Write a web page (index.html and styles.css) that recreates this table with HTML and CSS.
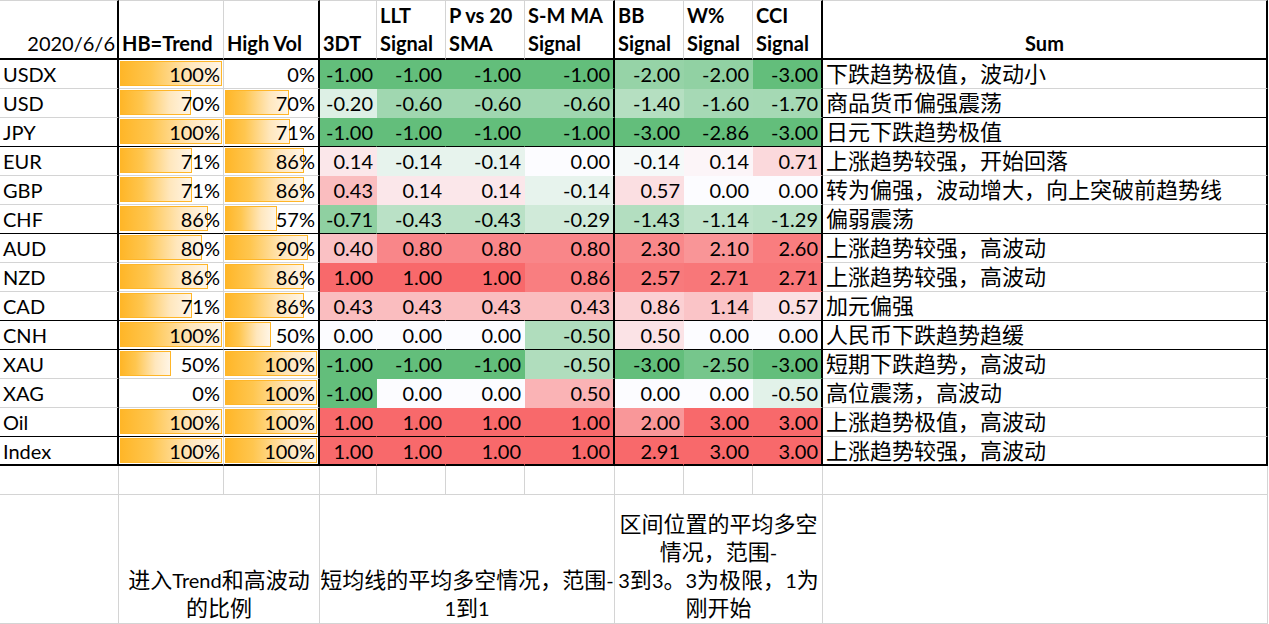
FILE: index.html
```html
<!DOCTYPE html>
<html lang="zh-CN">
<head>
<meta charset="utf-8">
<title>FX Signals 2020/6/6</title>
<link rel="stylesheet" href="styles.css">
</head>
<body>
<div class="sheet">
  <div class="r hd">
    <div class="c h l rk right">2020/6/6</div>
    <div class="c h l">HB=Trend</div>
    <div class="c h l rk">High Vol</div>
    <div class="c h">3DT</div>
    <div class="c h">LLT<br>Signal</div>
    <div class="c h">P vs 20<br>SMA</div>
    <div class="c h rk">S-M MA<br>Signal</div>
    <div class="c h">BB<br>Signal</div>
    <div class="c h">W%<br>Signal</div>
    <div class="c h rk">CCI<br>Signal</div>
    <div class="c h rk center">Sum</div>
  </div>

  <div class="r">
    <div class="c l nm rk">USDX</div>
    <div class="c l bc"><div class="trk"><div class="bar" style="width:100%"></div></div><span class="v">100%</span></div>
    <div class="c l bc rk"><div class="trk"></div><span class="v">0%</span></div>
    <div class="c n" style="background:#63BE7B">-1.00</div>
    <div class="c n" style="background:#63BE7B">-1.00</div>
    <div class="c n" style="background:#63BE7B">-1.00</div>
    <div class="c n rk" style="background:#63BE7B">-1.00</div>
    <div class="c n" style="background:#96D3A7">-2.00</div>
    <div class="c n" style="background:#91D1A3">-2.00</div>
    <div class="c n rk" style="background:#63BE7B">-3.00</div>
    <div class="c sum rk">下跌趋势极值，波动小</div>
  </div>

  <div class="r sb">
    <div class="c l nm rk">USD</div>
    <div class="c l bc"><div class="trk"><div class="bar" style="width:70%"></div></div><span class="v">70%</span></div>
    <div class="c l bc rk"><div class="trk"><div class="bar" style="width:70%"></div></div><span class="v">70%</span></div>
    <div class="c n" style="background:#DDF0E5">-0.20</div>
    <div class="c n" style="background:#A0D7B0">-0.60</div>
    <div class="c n" style="background:#A0D7B0">-0.60</div>
    <div class="c n rk" style="background:#A0D7B0">-0.60</div>
    <div class="c n" style="background:#B5DFC1">-1.40</div>
    <div class="c n" style="background:#A6D9B5">-1.60</div>
    <div class="c n rk" style="background:#A5D9B4">-1.70</div>
    <div class="c sum rk">商品货币偏强震荡</div>
  </div>

  <div class="r lb hb sb">
    <div class="c l nm rk">JPY</div>
    <div class="c l bc"><div class="trk"><div class="bar" style="width:100%"></div></div><span class="v">100%</span></div>
    <div class="c l bc rk"><div class="trk"><div class="bar" style="width:71%"></div></div><span class="v">71%</span></div>
    <div class="c n" style="background:#63BE7B">-1.00</div>
    <div class="c n" style="background:#63BE7B">-1.00</div>
    <div class="c n" style="background:#63BE7B">-1.00</div>
    <div class="c n rk" style="background:#63BE7B">-1.00</div>
    <div class="c n" style="background:#63BE7B">-3.00</div>
    <div class="c n" style="background:#63BE7B">-2.86</div>
    <div class="c n rk" style="background:#63BE7B">-3.00</div>
    <div class="c sum rk">日元下跌趋势极值</div>
  </div>

  <div class="r">
    <div class="c l nm rk">EUR</div>
    <div class="c l bc"><div class="trk"><div class="bar" style="width:71%"></div></div><span class="v">71%</span></div>
    <div class="c l bc rk"><div class="trk"><div class="bar" style="width:86%"></div></div><span class="v">86%</span></div>
    <div class="c n" style="background:#FBE7EA">0.14</div>
    <div class="c n" style="background:#E7F3ED">-0.14</div>
    <div class="c n" style="background:#E7F3ED">-0.14</div>
    <div class="c n rk" style="background:#FCFCFF">0.00</div>
    <div class="c n" style="background:#F5F9F9">-0.14</div>
    <div class="c n" style="background:#FCF5F8">0.14</div>
    <div class="c n rk" style="background:#FBD9DC">0.71</div>
    <div class="c sum rk">上涨趋势较强，开始回落</div>
  </div>

  <div class="r">
    <div class="c l nm rk">GBP</div>
    <div class="c l bc"><div class="trk"><div class="bar" style="width:71%"></div></div><span class="v">71%</span></div>
    <div class="c l bc rk"><div class="trk"><div class="bar" style="width:86%"></div></div><span class="v">86%</span></div>
    <div class="c n" style="background:#FABDBF">0.43</div>
    <div class="c n" style="background:#FBE7EA">0.14</div>
    <div class="c n" style="background:#FBE7EA">0.14</div>
    <div class="c n rk" style="background:#E7F3ED">-0.14</div>
    <div class="c n" style="background:#FBDFE2">0.57</div>
    <div class="c n" style="background:#FCFCFF">0.00</div>
    <div class="c n rk" style="background:#FCFCFF">0.00</div>
    <div class="c sum rk">转为偏强，波动增大，向上突破前趋势线</div>
  </div>

  <div class="r lb hb sb">
    <div class="c l nm rk">CHF</div>
    <div class="c l bc"><div class="trk"><div class="bar" style="width:86%"></div></div><span class="v">86%</span></div>
    <div class="c l bc rk"><div class="trk"><div class="bar" style="width:57%"></div></div><span class="v">57%</span></div>
    <div class="c n" style="background:#8FD0A1">-0.71</div>
    <div class="c n" style="background:#BAE1C6">-0.43</div>
    <div class="c n" style="background:#BAE1C6">-0.43</div>
    <div class="c n rk" style="background:#D0EAD9">-0.29</div>
    <div class="c n" style="background:#B3DEC0">-1.43</div>
    <div class="c n" style="background:#BFE3CA">-1.14</div>
    <div class="c n rk" style="background:#BAE1C6">-1.29</div>
    <div class="c sum rk">偏弱震荡</div>
  </div>

  <div class="r">
    <div class="c l nm rk">AUD</div>
    <div class="c l bc"><div class="trk"><div class="bar" style="width:80%"></div></div><span class="v">80%</span></div>
    <div class="c l bc rk"><div class="trk"><div class="bar" style="width:90%"></div></div><span class="v">90%</span></div>
    <div class="c n" style="background:#FAC1C4">0.40</div>
    <div class="c n" style="background:#F98689">0.80</div>
    <div class="c n" style="background:#F98689">0.80</div>
    <div class="c n rk" style="background:#F98689">0.80</div>
    <div class="c n" style="background:#F9888A">2.30</div>
    <div class="c n" style="background:#F99597">2.10</div>
    <div class="c n rk" style="background:#F97D7F">2.60</div>
    <div class="c sum rk">上涨趋势较强，高波动</div>
  </div>

  <div class="r">
    <div class="c l nm rk">NZD</div>
    <div class="c l bc"><div class="trk"><div class="bar" style="width:86%"></div></div><span class="v">86%</span></div>
    <div class="c l bc rk"><div class="trk"><div class="bar" style="width:86%"></div></div><span class="v">86%</span></div>
    <div class="c n" style="background:#F8696B">1.00</div>
    <div class="c n" style="background:#F8696B">1.00</div>
    <div class="c n" style="background:#F8696B">1.00</div>
    <div class="c n rk" style="background:#F97E80">0.86</div>
    <div class="c n" style="background:#F87A7C">2.57</div>
    <div class="c n" style="background:#F87779">2.71</div>
    <div class="c n rk" style="background:#F87779">2.71</div>
    <div class="c sum rk">上涨趋势较强，高波动</div>
  </div>

  <div class="r lb hb sb">
    <div class="c l nm rk">CAD</div>
    <div class="c l bc"><div class="trk"><div class="bar" style="width:71%"></div></div><span class="v">71%</span></div>
    <div class="c l bc rk"><div class="trk"><div class="bar" style="width:86%"></div></div><span class="v">86%</span></div>
    <div class="c n" style="background:#FABDBF">0.43</div>
    <div class="c n" style="background:#FABDBF">0.43</div>
    <div class="c n" style="background:#FABDBF">0.43</div>
    <div class="c n rk" style="background:#FABDBF">0.43</div>
    <div class="c n" style="background:#FBD0D3">0.86</div>
    <div class="c n" style="background:#FAC4C7">1.14</div>
    <div class="c n rk" style="background:#FBE0E3">0.57</div>
    <div class="c sum rk">加元偏强</div>
  </div>

  <div class="r lb hb sb">
    <div class="c l nm rk">CNH</div>
    <div class="c l bc"><div class="trk"><div class="bar" style="width:100%"></div></div><span class="v">100%</span></div>
    <div class="c l bc rk"><div class="trk"><div class="bar" style="width:50%"></div></div><span class="v">50%</span></div>
    <div class="c n" style="background:#FCFCFF">0.00</div>
    <div class="c n" style="background:#FCFCFF">0.00</div>
    <div class="c n" style="background:#FCFCFF">0.00</div>
    <div class="c n rk" style="background:#B0DDBD">-0.50</div>
    <div class="c n" style="background:#FBE3E6">0.50</div>
    <div class="c n" style="background:#FCFCFF">0.00</div>
    <div class="c n rk" style="background:#FCFCFF">0.00</div>
    <div class="c sum rk">人民币下跌趋势趋缓</div>
  </div>

  <div class="r">
    <div class="c l nm rk">XAU</div>
    <div class="c l bc"><div class="trk"><div class="bar" style="width:50%"></div></div><span class="v">50%</span></div>
    <div class="c l bc rk"><div class="trk"><div class="bar" style="width:100%"></div></div><span class="v">100%</span></div>
    <div class="c n" style="background:#63BE7B">-1.00</div>
    <div class="c n" style="background:#63BE7B">-1.00</div>
    <div class="c n" style="background:#63BE7B">-1.00</div>
    <div class="c n rk" style="background:#B0DDBD">-0.50</div>
    <div class="c n" style="background:#63BE7B">-3.00</div>
    <div class="c n" style="background:#76C68C">-2.50</div>
    <div class="c n rk" style="background:#63BE7B">-3.00</div>
    <div class="c sum rk">短期下跌趋势，高波动</div>
  </div>

  <div class="r">
    <div class="c l nm rk">XAG</div>
    <div class="c l bc"><div class="trk"></div><span class="v">0%</span></div>
    <div class="c l bc rk"><div class="trk"><div class="bar" style="width:100%"></div></div><span class="v">100%</span></div>
    <div class="c n" style="background:#63BE7B">-1.00</div>
    <div class="c n" style="background:#FCFCFF">0.00</div>
    <div class="c n" style="background:#FCFCFF">0.00</div>
    <div class="c n rk" style="background:#FAB3B5">0.50</div>
    <div class="c n" style="background:#FCFCFF">0.00</div>
    <div class="c n" style="background:#FCFCFF">0.00</div>
    <div class="c n rk" style="background:#E2F2E9">-0.50</div>
    <div class="c sum rk">高位震荡，高波动</div>
  </div>

  <div class="r lb hb">
    <div class="c l nm rk">Oil</div>
    <div class="c l bc"><div class="trk"><div class="bar" style="width:100%"></div></div><span class="v">100%</span></div>
    <div class="c l bc rk"><div class="trk"><div class="bar" style="width:100%"></div></div><span class="v">100%</span></div>
    <div class="c n" style="background:#F8696B">1.00</div>
    <div class="c n" style="background:#F8696B">1.00</div>
    <div class="c n" style="background:#F8696B">1.00</div>
    <div class="c n rk" style="background:#F8696B">1.00</div>
    <div class="c n" style="background:#F99799">2.00</div>
    <div class="c n" style="background:#F8696B">3.00</div>
    <div class="c n rk" style="background:#F8696B">3.00</div>
    <div class="c sum rk">上涨趋势极值，高波动</div>
  </div>

  <div class="r last">
    <div class="c l nm rk">Index</div>
    <div class="c l bc"><div class="trk"><div class="bar" style="width:100%"></div></div><span class="v">100%</span></div>
    <div class="c l bc rk"><div class="trk"><div class="bar" style="width:100%"></div></div><span class="v">100%</span></div>
    <div class="c n" style="background:#F8696B">1.00</div>
    <div class="c n" style="background:#F8696B">1.00</div>
    <div class="c n" style="background:#F8696B">1.00</div>
    <div class="c n rk" style="background:#F8696B">1.00</div>
    <div class="c n" style="background:#F8696B">2.91</div>
    <div class="c n" style="background:#F8696B">3.00</div>
    <div class="c n rk" style="background:#F8696B">3.00</div>
    <div class="c sum rk">上涨趋势较强，高波动</div>
  </div>

  <div class="r blank">
    <div class="c"></div><div class="c"></div><div class="c"></div><div class="c"></div>
    <div class="c"></div><div class="c"></div><div class="c"></div><div class="c"></div>
    <div class="c"></div><div class="c"></div><div class="c"></div>
  </div>

  <div class="r notes">
    <div class="c"></div>
    <div class="c note span-bc"><p class="nt">进入<span class="lat">Trend</span>和高波动<br>的比例</p></div>
    <div class="c note span-dg"><p class="nt">短均线的平均多空情况，范围<span class="lat">-</span><br><span class="lat">1</span>到<span class="lat">1</span></p></div>
    <div class="c note span-hj"><p class="nt">区间位置的平均多空<br>情况，范围<span class="lat">-</span><br><span class="lat">3</span>到<span class="lat">3</span>。<span class="lat">3</span>为极限，<span class="lat">1</span>为<br>刚开始</p></div>
    <div class="c"></div>
  </div>
</div>
</body>
</html>
```

FILE: styles.css
```css
html, body {
  margin: 0;
  padding: 0;
  background: #ffffff;
}

body {
  font-family: Lato, "Noto Sans CJK SC", sans-serif;
  font-size: 20px;
  color: #000000;
  overflow: hidden;
}

.sheet {
  display: grid;
  grid-template-columns: 119px 105px 96px 57px 69px 79px 90px 69px 69px 70px 445px;
  grid-template-rows: 60px repeat(14, 29px) 29px 129px;
  width: 1268px;
}

.r {
  display: contents;
}

/* generic cell */
.c {
  box-sizing: border-box;
  border-right: 1px solid #d4d4d4;
  border-bottom: 1px solid #d4d4d4;
  line-height: 28px;
  padding: 0 3px;
  white-space: nowrap;
  min-width: 0;
}

/* header */
.h {
  border-top: 1px solid #d4d4d4;
  border-bottom: 2px solid #000000;
  font-weight: 700;
  display: flex;
  flex-direction: column;
  justify-content: flex-end;
  padding-bottom: 1px;
}

.h.right {
  font-weight: 400;
  text-align: right;
  padding-right: 2px;
}

.h.center {
  text-align: center;
}

/* heat-map numbers */
.n {
  text-align: right;
  border-right-color: transparent;
  border-bottom-color: transparent;
}

/* data-bar cells */
.bc {
  display: grid;
  padding: 0;
}

.trk {
  grid-area: 1 / 1;
  margin: 1px 1px 2px 1px;
}

.bar {
  box-sizing: border-box;
  height: 100%;
  border: 1px solid #ffb628;
  background: linear-gradient(90deg, #ffb628 0%, #ffc64f 30%, #ffe7bd 70%, #fff5e6 100%);
}

.v {
  grid-area: 1 / 1;
  justify-self: end;
  align-self: start;
  padding-right: 3px;
}

/* Sum column */
.sum {
  font-family: "Noto Sans CJK SC", sans-serif;
  font-size: 22px;
  line-height: 24px;
}

/* group borders */
.r.lb > .l {
  border-bottom-color: #000000;
}

.r.hb > .n {
  border-bottom-color: #000000;
}

.r.sb > .sum {
  border-bottom-color: #000000;
}

.r.last > .c {
  border-bottom: 2px solid #000000;
}

.c.rk {
  border-right: 2px solid #000000;
}

/* notes row */
.note {
  display: flex;
  flex-direction: column;
  justify-content: flex-end;
  padding: 0 0 3px 0;
}

.nt {
  margin: 0;
  font-family: "Noto Sans CJK SC", sans-serif;
  font-size: 22px;
  line-height: 28px;
  text-align: center;
  white-space: nowrap;
}

.span-bc {
  grid-column: span 2;
}

.span-dg {
  grid-column: span 4;
}

.span-hj {
  grid-column: span 3;
}

.lat {
  font-family: Lato, sans-serif;
  font-size: 20px;
  line-height: normal;
}
```
